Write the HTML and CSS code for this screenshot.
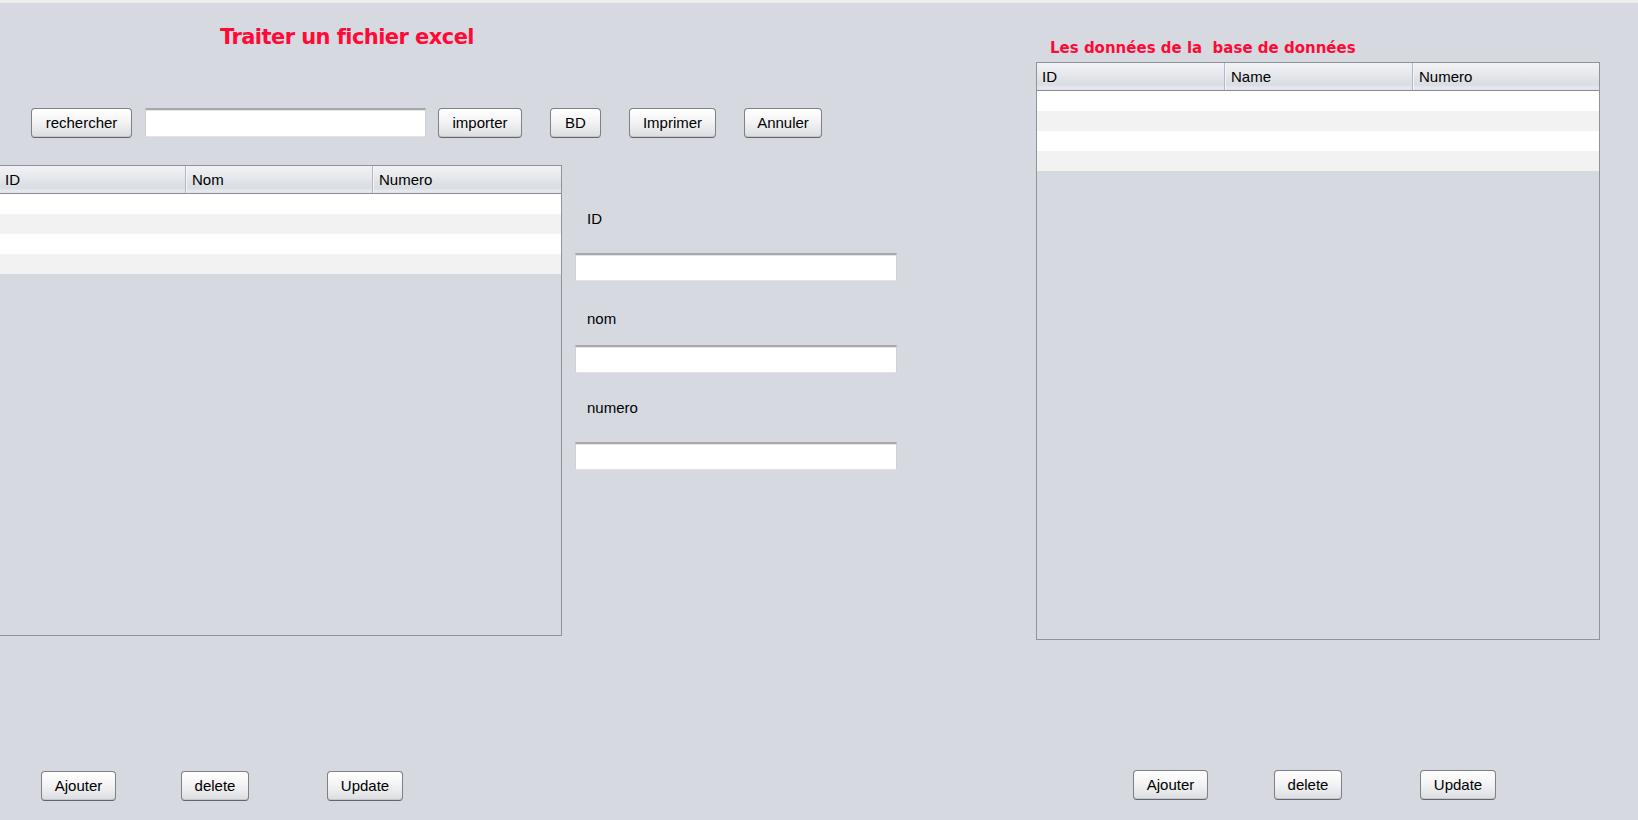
FILE: index.html
```html
<!DOCTYPE html>
<html lang="fr">
<head>
<meta charset="utf-8">
<title>Traiter un fichier excel</title>
<link rel="stylesheet" href="styles.css">
</head>
<body>
<div class="app">
  <section class="pane-left">
    <h1 class="title-main">Traiter un fichier excel</h1>
    <div class="toolbar">
      <button class="btn b-rech">rechercher</button>
      <input class="field f-search" type="text">
      <button class="btn b-import">importer</button>
      <button class="btn b-bd">BD</button>
      <button class="btn b-print">Imprimer</button>
      <button class="btn b-cancel">Annuler</button>
    </div>
    <div class="work">
      <div class="table t-left">
        <div class="thead">
          <div class="th">ID</div>
          <div class="th">Nom</div>
          <div class="th">Numero</div>
        </div>
        <div class="row"></div>
        <div class="row alt"></div>
        <div class="row"></div>
        <div class="row alt"></div>
      </div>
      <div class="form">
        <label class="lbl l-id">ID</label>
        <input class="field f-form f1" type="text">
        <label class="lbl l-nom">nom</label>
        <input class="field f-form f2" type="text">
        <label class="lbl l-num">numero</label>
        <input class="field f-form f3" type="text">
      </div>
    </div>
    <div class="actions a-left">
      <button class="btn b-add">Ajouter</button>
      <button class="btn b-del">delete</button>
      <button class="btn b-upd">Update</button>
    </div>
  </section>
  <section class="pane-right">
    <h2 class="title-db">Les données de la&nbsp; base de données</h2>
    <div class="table t-right">
      <div class="thead">
        <div class="th">ID</div>
        <div class="th">Name</div>
        <div class="th">Numero</div>
      </div>
      <div class="row"></div>
      <div class="row alt"></div>
      <div class="row"></div>
      <div class="row alt"></div>
    </div>
    <div class="actions a-right">
      <button class="btn b-add">Ajouter</button>
      <button class="btn b-del">delete</button>
      <button class="btn b-upd">Update</button>
    </div>
  </section>
</div>
</body>
</html>
```

FILE: styles.css
```css
* { box-sizing: border-box; }

html, body {
  margin: 0;
  padding: 0;
}

body {
  width: 1638px;
  height: 820px;
  overflow: hidden;
  background: #d6d9e0;
  border-top: 3px solid #ededee;
  font-family: "Liberation Sans", Arial, sans-serif;
  font-size: 15px;
  color: #000;
}

.app {
  display: flex;
  align-items: flex-start;
}

.pane-left {
  width: 1036px;
  flex: none;
}

.pane-right {
  width: 564px;
  flex: none;
}

/* Titles */
.title-main {
  margin: 22px 0 0 220px;
  font-family: "DejaVu Sans", Verdana, sans-serif;
  font-weight: bold;
  font-size: 21px;
  letter-spacing: -0.56px;
  line-height: 25px;
  height: 25px;
  color: #ff0a36;
}

.title-db {
  margin: 36px 0 0 14px;
  font-family: "DejaVu Sans", Verdana, sans-serif;
  font-weight: bold;
  font-size: 15px;
  line-height: 18px;
  height: 18px;
  color: #ff0a36;
}

/* Buttons */
.btn {
  height: 30px;
  padding: 0;
  border: 1px solid #7d8086;
  border-bottom-color: #62666c;
  border-radius: 4px;
  background: linear-gradient(to bottom, #ffffff 0%, #f5f5f6 40%, #e7e8ea 75%, #dbdcdf 100%);
  box-shadow: inset 0 1px 0 #ffffff, inset 0 -1px 0 #c6c8cc;
  font-family: "Liberation Sans", Arial, sans-serif;
  font-size: 15px;
  color: #000;
  text-align: center;
  line-height: 28px;
  flex: none;
}

/* Text fields */
.field {
  display: block;
  margin: 0;
  padding: 0 4px;
  background: #ffffff;
  border: 1px solid #cfd1d4;
  border-top: 2px solid #a8a9ab;
  border-bottom-color: #e2e3e5;
  box-shadow: inset 0 1px 0 #e4e4e4;
  font-family: "Liberation Sans", Arial, sans-serif;
  font-size: 15px;
  outline: none;
}

/* Toolbar */
.toolbar {
  display: flex;
  align-items: flex-start;
  margin-top: 58px;
  height: 30px;
}

.b-rech { margin-left: 31px; width: 101px; }
.f-search { margin-left: 13px; width: 281px; height: 29px; }
.b-import { margin-left: 12px; width: 84px; }
.b-bd { margin-left: 28px; width: 51px; }
.b-print { margin-left: 28px; width: 87px; }
.b-cancel { margin-left: 28px; width: 78px; }

/* Work area */
.work {
  display: flex;
  align-items: flex-start;
  margin-top: 27px;
}

/* Tables */
.table {
  border: 1px solid #8f939a;
  background: #d6d9e0;
  flex: none;
}

.t-left {
  margin-left: -1px;
  width: 563px;
  height: 471px;
}

.t-left .thead {
  grid-template-columns: 185px 187px 1fr;
}

.t-right {
  margin-top: 5px;
  width: 564px;
  height: 578px;
}

.t-right .thead {
  grid-template-columns: 187px 188px 1fr;
}

.thead {
  display: grid;
  height: 28px;
  border-bottom: 1px solid #8a8d94;
  background: linear-gradient(to bottom, #f1f2f5 0%, #e8eaee 35%, #dcdfe4 70%, #dadde3 82%, #e6e9f0 92%, #dfe2e9 100%);
}

.th {
  padding-left: 5px;
  line-height: 27px;
  font-size: 15px;
  color: #000;
  white-space: nowrap;
}

.th + .th {
  border-left: 1px solid #b4b8c0;
  box-shadow: inset 1px 0 0 #f4f5f7;
  padding-left: 6px;
}

.row {
  height: 20px;
  background: #ffffff;
}

.row.alt {
  background: #f2f2f2;
}

/* Form */
.form {
  display: flex;
  flex-direction: column;
  margin-left: 13px;
  width: 322px;
}

.lbl {
  display: block;
  padding-left: 12px;
  height: 17px;
  line-height: 17px;
  font-size: 15px;
}

.f-form { width: 322px; height: 28px; }

.l-id { margin-top: 45px; }
.f1 { margin-top: 26px; }
.l-nom { margin-top: 29px; }
.f2 { margin-top: 18px; }
.l-num { margin-top: 26px; }
.f3 { margin-top: 26px; }

/* Bottom actions */
.actions {
  display: flex;
  align-items: flex-start;
  height: 30px;
}

.a-left { margin-top: 135px; }
.a-right { margin-top: 130px; }

.b-add { width: 75px; }
.b-del { width: 68px; }
.b-upd { width: 76px; }

.a-left .b-add { margin-left: 41px; }
.a-left .b-del { margin-left: 65px; }
.a-left .b-upd { margin-left: 78px; }

.a-right .b-add { margin-left: 97px; }
.a-right .b-del { margin-left: 66px; }
.a-right .b-upd { margin-left: 78px; }
```
